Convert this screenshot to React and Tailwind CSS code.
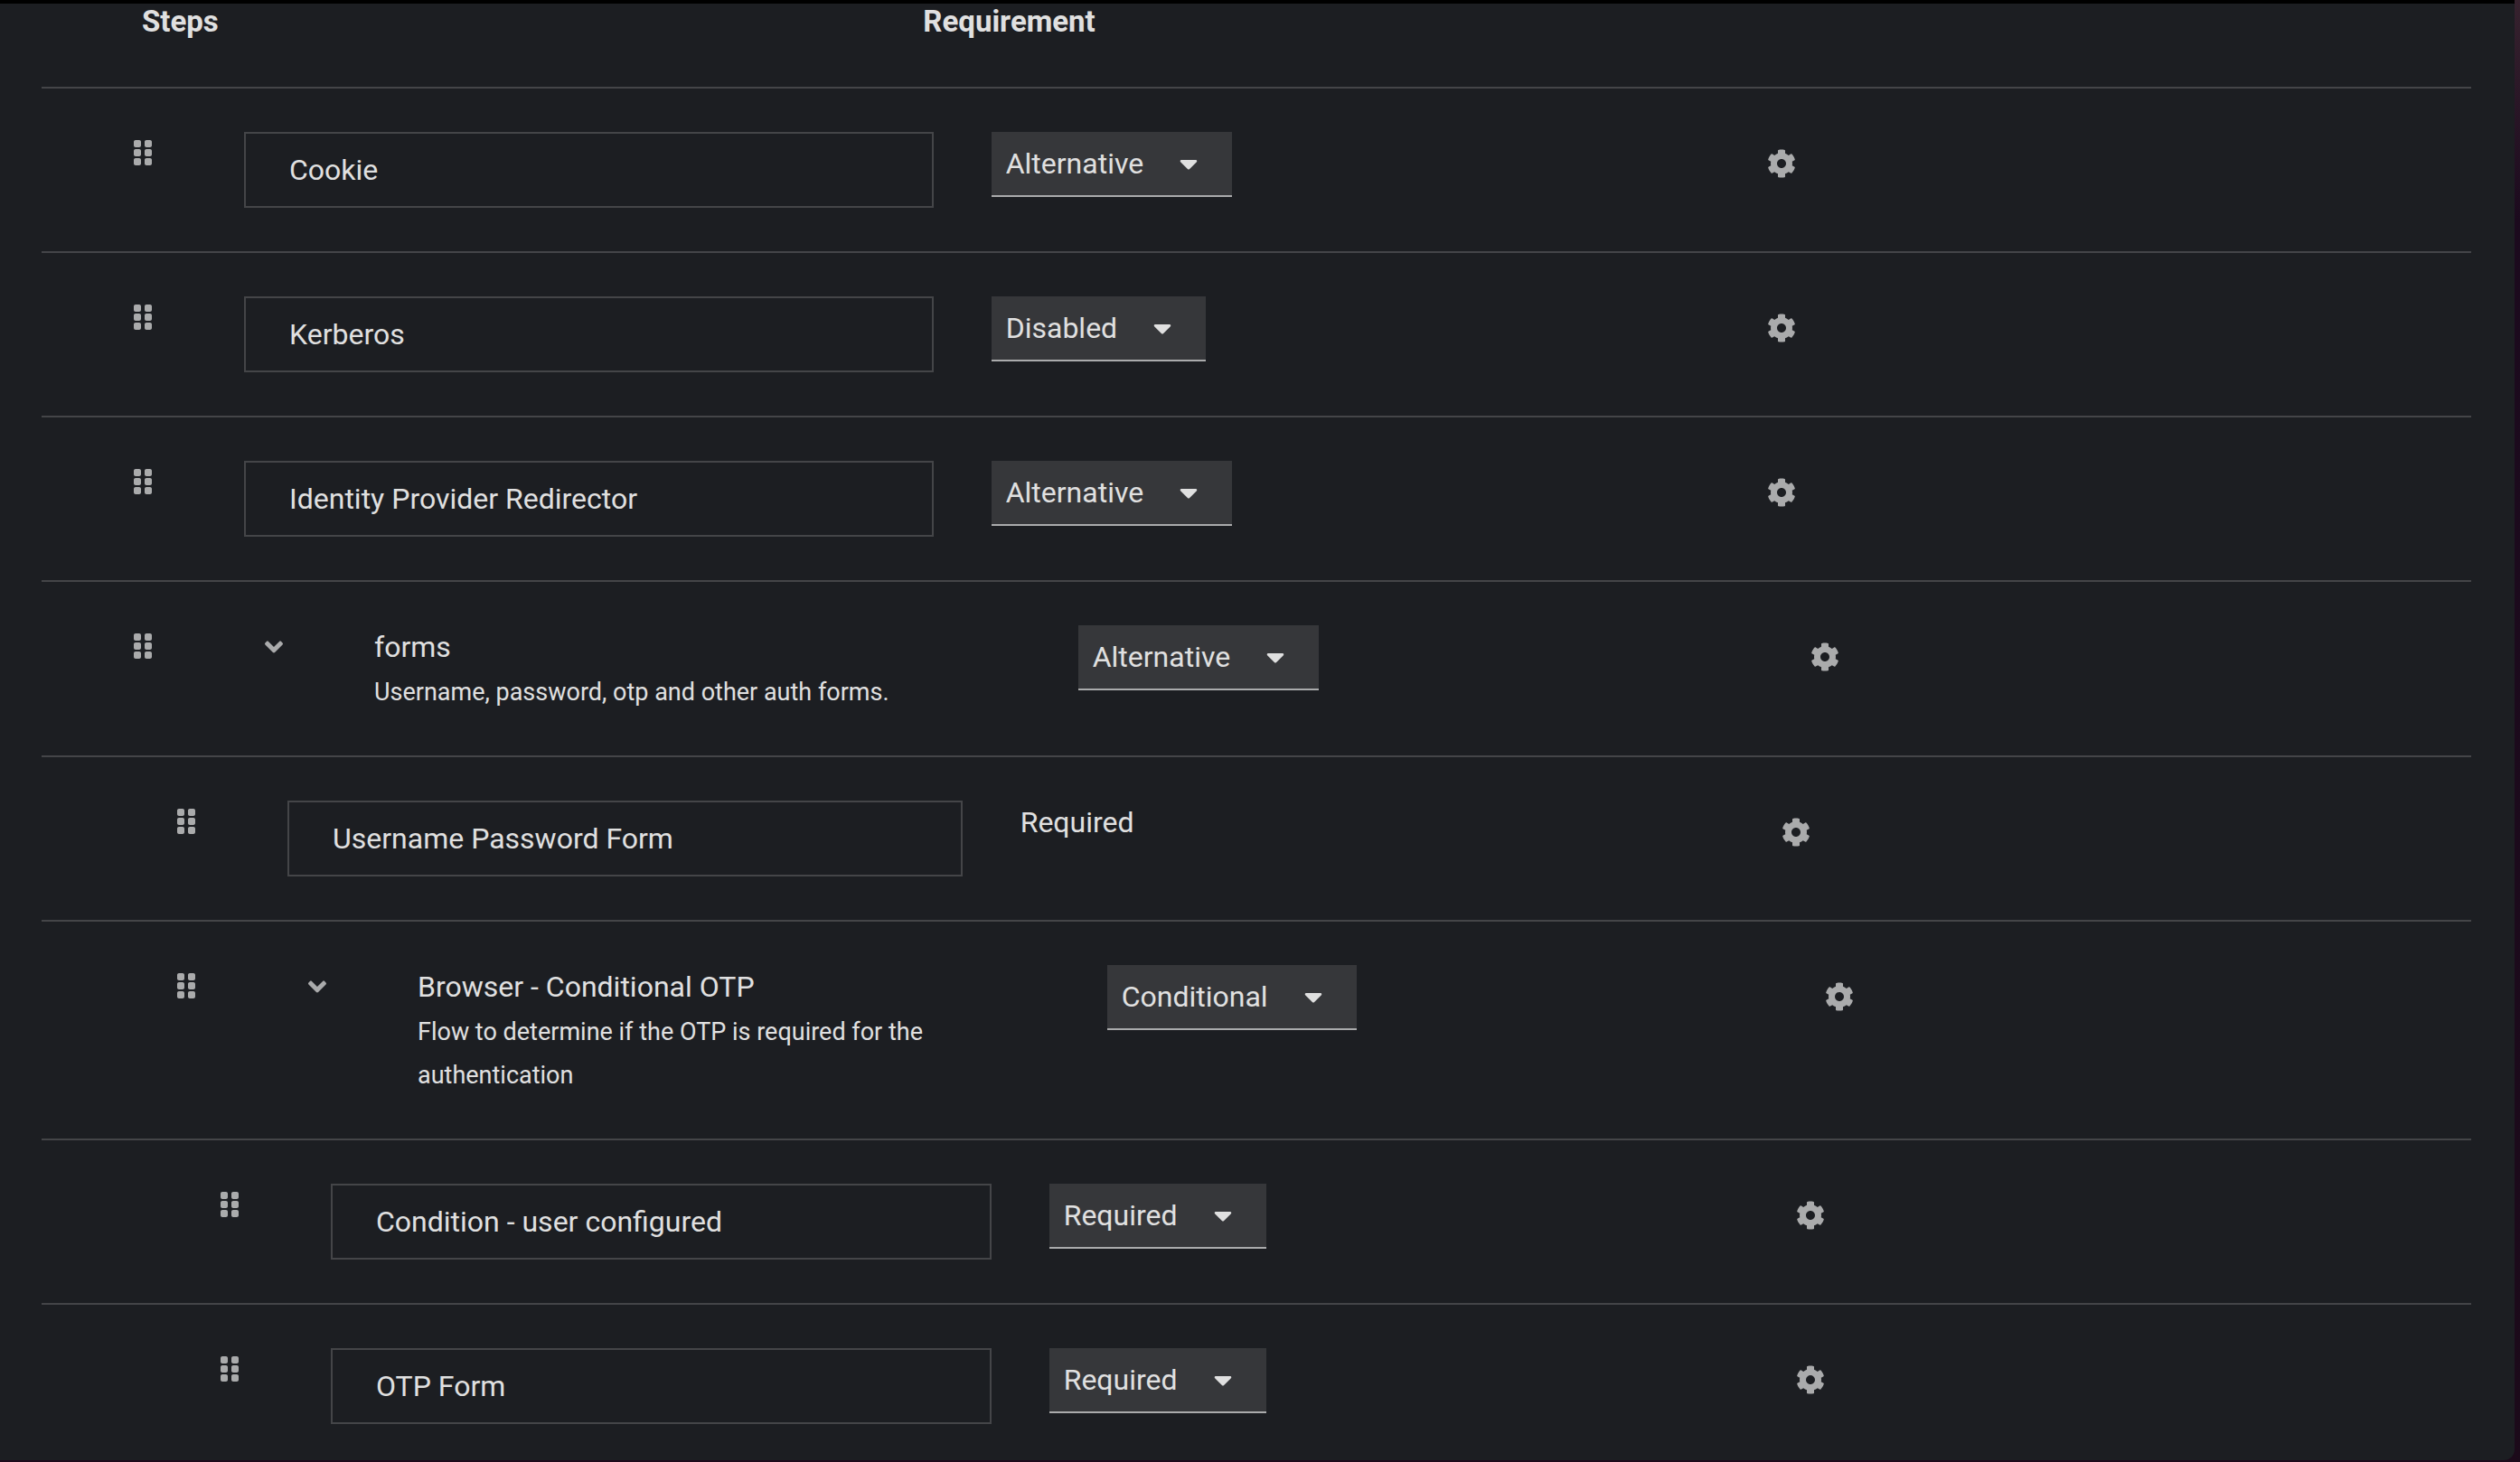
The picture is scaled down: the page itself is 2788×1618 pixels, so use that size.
import React, { useState } from 'react';
import { FaAngleDown, FaCaretDown, FaCog, FaGripVertical } from 'react-icons/fa';

const REQUIREMENTS = ['Required', 'Alternative', 'Disabled', 'Conditional'];

const executions = [
  { id: 'cookie', name: 'Cookie', level: 0, requirement: 'Alternative' },
  { id: 'kerberos', name: 'Kerberos', level: 0, requirement: 'Disabled' },
  { id: 'idp', name: 'Identity Provider Redirector', level: 0, requirement: 'Alternative' },
  {
    id: 'forms',
    name: 'forms',
    description: 'Username, password, otp and other auth forms.',
    level: 0,
    requirement: 'Alternative',
    isFlow: true,
  },
  { id: 'upf', name: 'Username Password Form', level: 1, requirement: 'Required', fixed: true },
  {
    id: 'cotp',
    name: 'Browser - Conditional OTP',
    description: 'Flow to determine if the OTP is required for the authentication',
    level: 1,
    requirement: 'Conditional',
    isFlow: true,
  },
  { id: 'cond', name: 'Condition - user configured', level: 2, requirement: 'Required' },
  { id: 'otp', name: 'OTP Form', level: 2, requirement: 'Required' },
];

const indent = ['pl-[102px]', 'pl-[150px]', 'pl-[198px]'];

const RequirementSelect = ({ name, value, onChange }) => (
  <div className="inline-grid items-center bg-[#36373a] border-b-2 border-[#aaabac]">
    <select
      aria-label={`${name} requirement`}
      value={value}
      onChange={(e) => onChange(e.target.value)}
      className="col-start-1 row-start-1 appearance-none field-sizing-content bg-transparent h-[70px] pl-4 pr-[98px] outline-none cursor-pointer"
    >
      {REQUIREMENTS.map((r) => (
        <option key={r} value={r}>{r}</option>
      ))}
    </select>
    <FaCaretDown className="col-start-1 row-start-1 justify-self-end mr-[38px] w-5 h-8 pointer-events-none" />
  </div>
);

const ExecutionRow = ({ execution }) => {
  const { name, description, level, isFlow, fixed } = execution;
  const [requirement, setRequirement] = useState(execution.requirement);

  return (
    <li className={`flex items-start py-12 pr-12 border-b-2 border-[#444548] ${indent[level]}`}>
      <button type="button" aria-label={`Drag ${name}`} className="flex items-center h-[46px] w-[122px] shrink-0 text-[#aaabac] cursor-grab">
        <FaGripVertical className="w-5 h-8" />
      </button>

      {isFlow && (
        <div className="w-36 shrink-0">
          <button type="button" aria-label={`Toggle ${name}`} aria-expanded="true" className="flex items-center justify-center h-12 w-[66px] text-[#aaabac]">
            <FaAngleDown className="w-5 h-8" />
          </button>
        </div>
      )}

      <div className="flex flex-1 gap-16 items-start">
        <div className="flex-1 min-w-0">
          {isFlow ? (
            <>
              <div className="leading-12">{name}</div>
              <div className="text-[27px] leading-12 pt-0.5 -mb-0.5">{description}</div>
            </>
          ) : (
            <div className="border-2 border-[#444548] px-12 py-4 leading-12">{name}</div>
          )}
        </div>
        <div className="flex flex-1 min-w-0">
          {fixed ? (
            <div className="leading-12">{requirement}</div>
          ) : (
            <RequirementSelect name={name} value={requirement} onChange={setRequirement} />
          )}
        </div>
        <div className="flex flex-1 min-w-0">
          <button type="button" aria-label={`${name} settings`} className="flex items-center h-[70px] px-8 text-[#aaabac]">
            <FaCog className="w-8 h-8" />
          </button>
        </div>
      </div>
    </li>
  );
};

const App = () => {
  return (
    <div className="min-h-screen flex flex-col pr-1.5 pb-0.5 bg-linear-to-b from-[#36222e] via-[#1c0a1e] via-15% to-[#1c0a1a]">
      <div className="flex-1 bg-[#1c1e22] border-t-4 border-black rounded-br-xl text-[#e0e0e0] text-[32px] font-[Roboto,sans-serif]">
        <div className="pl-[46px] pr-12">
          <div className="flex gap-16 pl-[111px] pr-12 pb-[52px] border-b-2 border-[#444548] text-[33px] leading-10 font-bold">
            <div className="flex-1">Steps</div>
            <div className="flex-1">Requirement</div>
            <div className="flex-1"></div>
          </div>
          <ul className="[&>li:last-child]:border-b-0 [&>li:last-child]:pb-0">
            {executions.map((execution) => (
              <ExecutionRow key={execution.id} execution={execution} />
            ))}
          </ul>
        </div>
      </div>
    </div>
  );
};

export default App;
